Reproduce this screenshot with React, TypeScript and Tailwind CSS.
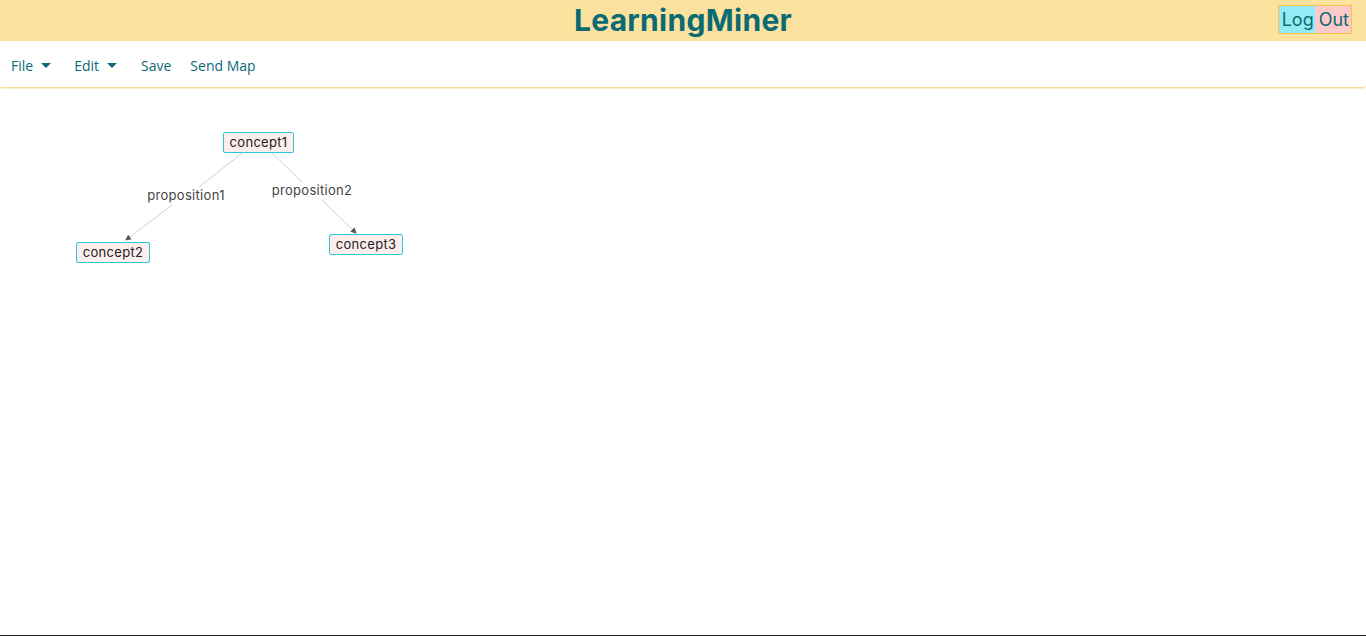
import React from "react";

const nodes = [
  { label: "concept1", x: 223, y: 132, w: 71 },
  { label: "concept2", x: 76, y: 242, w: 74 },
  { label: "concept3", x: 329, y: 234, w: 74 },
];

const links = [
  { label: "proposition1", x: 186, y: 196 },
  { label: "proposition2", x: 312, y: 191 },
];

function Caret() {
  return (
    <svg width="10" height="6" viewBox="0 0 10 6" className="ml-[8px]">
      <path d="M0 0 L10 0 L5 5 Z" fill="#0b6a73" />
    </svg>
  );
}

export default function App() {
  return (
    <div className="relative h-[636px] w-full overflow-hidden bg-white" style={{ fontFamily: '"Open Sans", sans-serif' }}>
      <header className="relative flex h-[41px] items-center justify-center bg-[#fbe29f]">
        <h1 className="text-[30px] font-bold tracking-[0.3px] text-[#0b6a73]" style={{ fontFamily: 'Inter, sans-serif' }}>
          LearningMiner
        </h1>
        <button
          className="absolute right-[14px] top-[5px] flex h-[29px] border border-[#f3c445] text-[18px] text-[#0b6a73]"
          style={{ fontFamily: 'Inter, sans-serif' }}
        >
          <span className="flex h-full items-center bg-[#94eaf5] pl-[3px] pr-[1px]">Log</span>
          <span className="flex h-full items-center bg-[#fdcaca] pl-[4px] pr-[2px] text-[#0b6a73]">Out</span>
        </button>
      </header>

      <nav className="flex h-[47px] items-center rounded-b-[3px] border-b border-[#f6dd93] px-[11px] pt-[3px] text-[14px] text-[#0b6a73] shadow-[0_1px_1px_rgba(240,210,120,0.4)]">
        <span className="flex items-center">File<Caret /></span>
        <span className="ml-[23px] flex items-center">Edit<Caret /></span>
        <span className="ml-[24px]">Save</span>
        <span className="ml-[19px]">Send Map</span>
      </nav>

      <div className="relative h-[546px]" style={{ fontFamily: 'Inter, sans-serif' }}>
        <svg className="absolute left-0 top-0" width="500" height="300" viewBox="0 88 500 300">
          <defs>
            <marker id="arr" markerWidth="6" markerHeight="6" refX="5" refY="3" orient="auto">
              <path d="M0 0 L6 3 L0 6 Z" fill="#555" />
            </marker>
          </defs>
          <g stroke="#c5d3d3" strokeWidth="1" fill="none">
            <line x1="242" y1="153" x2="199" y2="187" />
            <line x1="172" y1="205" x2="126" y2="240" markerEnd="url(#arr)" />
            <line x1="272" y1="153" x2="303" y2="183" />
            <line x1="322" y1="200" x2="356" y2="233" markerEnd="url(#arr)" />
          </g>
        </svg>
        {links.map((l) => (
          <div
            key={l.label}
            className="absolute -translate-x-1/2 -translate-y-1/2 whitespace-nowrap text-[13px] tracking-[0.3px] text-[#444]"
            style={{ left: l.x, top: l.y - 88 }}
          >
            {l.label}
          </div>
        ))}
        {nodes.map((n) => (
          <div
            key={n.label}
            className="absolute flex h-[21px] items-center justify-center rounded-[2px] border border-[#2ec7d9] bg-[#fdeeee] pt-px text-[13px] tracking-[0.3px] text-[#222]"
            style={{ left: n.x, top: n.y - 88, width: n.w }}
          >
            {n.label}
          </div>
        ))}
      </div>
      <div className="absolute bottom-0 left-0 h-px w-full bg-[#222]" />
    </div>
  );
}
